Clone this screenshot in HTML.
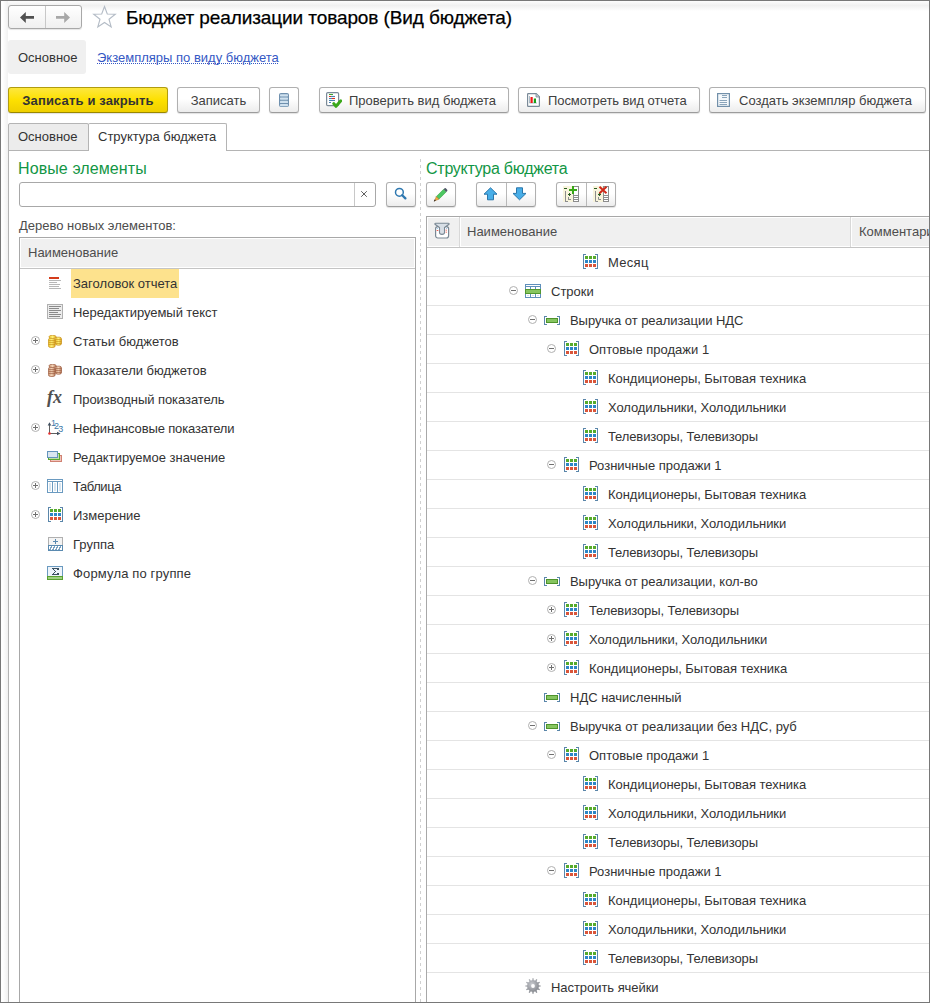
<!DOCTYPE html>
<html><head><meta charset="utf-8">
<style>
*{box-sizing:border-box;margin:0;padding:0}
html,body{width:930px;height:1003px;overflow:hidden;background:#fff}
body{position:relative;font-family:"Liberation Sans",sans-serif;font-size:13px;color:#333}
.a{position:absolute}
.t{position:absolute;white-space:nowrap}
.win{left:0;top:0;width:930px;height:1003px;border:1px solid #787878}
.btn{position:absolute;top:87px;height:26px;padding-top:1px;border:1px solid #b0b0b0;border-bottom-color:#9c9c9c;border-radius:3px;background:linear-gradient(#fff 0%,#fff 45%,#ececec 100%);box-shadow:0 1px 1px rgba(0,0,0,.12);line-height:24px;white-space:nowrap;color:#404040}
.sbtn{position:absolute;top:182px;height:25px;border:1px solid #b0b0b0;border-bottom-color:#9c9c9c;border-radius:3px;background:linear-gradient(#fff 0%,#fff 45%,#ececec 100%);box-shadow:0 1px 1px rgba(0,0,0,.12)}
.ico{position:absolute}
.row{position:absolute;height:29px;line-height:28px;white-space:nowrap}
</style></head><body>
<svg width="0" height="0" style="position:absolute">
<defs>
<linearGradient id="gcoin" x1="0" x2="1" y1="0" y2="0"><stop offset="0" stop-color="#f0c830"/><stop offset="0.5" stop-color="#fff27a"/><stop offset="1" stop-color="#e0a820"/></linearGradient>
<linearGradient id="bcoin" x1="0" x2="1" y1="0" y2="0"><stop offset="0" stop-color="#d09a78"/><stop offset="0.5" stop-color="#f4d4b8"/><stop offset="1" stop-color="#b87858"/></linearGradient>
<symbol id="dim" viewBox="0 0 15 15" shape-rendering="crispEdges">
<path d="M3 0.5H0.5V14.5H3M12 0.5H14.5V14.5H12" fill="none" stroke="#5a86aa"/>
<g fill="#56ab2c"><rect x="2" y="2" width="3" height="3"/><rect x="6" y="2" width="3" height="3"/><rect x="10" y="2" width="3" height="3"/></g>
<g fill="#2d86c6"><rect x="2" y="6" width="3" height="3"/><rect x="6" y="6" width="3" height="3"/><rect x="10" y="6" width="3" height="3"/></g>
<g fill="#d9553a"><rect x="2" y="10" width="3" height="3"/><rect x="6" y="10" width="3" height="3"/><rect x="10" y="10" width="3" height="3"/></g>
</symbol>
<symbol id="rows" viewBox="0 0 16 14" shape-rendering="crispEdges">
<rect x="0" y="0" width="16" height="14" fill="#5e8fbb"/>
<rect x="1" y="1" width="14" height="1" fill="#fff"/>
<rect x="1" y="3" width="4" height="2" fill="#fff"/><rect x="6" y="3" width="4" height="2" fill="#fff"/><rect x="11" y="3" width="4" height="2" fill="#fff"/>
<rect x="0" y="5" width="16" height="5" fill="#52972f"/>
<rect x="1" y="6" width="14" height="3" fill="#86c560"/>
<rect x="1" y="10" width="4" height="3" fill="#fff"/><rect x="6" y="10" width="4" height="3" fill="#fff"/><rect x="11" y="10" width="4" height="3" fill="#fff"/>
<rect x="2" y="11" width="2" height="1" fill="#cfe0f0"/><rect x="7" y="11" width="2" height="1" fill="#cfe0f0"/><rect x="12" y="11" width="2" height="1" fill="#cfe0f0"/>
</symbol>
<symbol id="bar" viewBox="0 0 16 9" shape-rendering="crispEdges">
<path d="M3 0.5H0.5V8.5H3M13 0.5H15.5V8.5H13" fill="none" stroke="#5a86aa"/>
<rect x="2" y="2" width="12" height="5" fill="#4f932c"/>
<rect x="3" y="3" width="10" height="3" fill="#86c560"/>
</symbol>
<symbol id="minus" viewBox="0 0 9 9">
<circle cx="4.5" cy="4.5" r="4" fill="#fff" stroke="#b0b0b0"/>
<rect x="2" y="4" width="5" height="1" fill="#707070"/>
</symbol>
<symbol id="plus" viewBox="0 0 9 9">
<circle cx="4.5" cy="4.5" r="4" fill="#fff" stroke="#b0b0b0"/>
<rect x="2" y="4" width="5" height="1" fill="#707070"/>
<rect x="4" y="2" width="1" height="5" fill="#707070"/>
</symbol>
<symbol id="gear" viewBox="0 0 16 16">
<radialGradient id="ggr" cx="0.4" cy="0.35" r="0.7"><stop offset="0" stop-color="#c8cacf"/><stop offset="1" stop-color="#85888e"/></radialGradient>
<path fill="url(#ggr)" d="M13.54 7.20 L15.68 7.39 L15.68 8.61 L13.54 8.80 L13.20 10.08 L14.95 11.31 L14.34 12.37 L12.40 11.47 L11.47 12.40 L12.37 14.34 L11.31 14.95 L10.08 13.20 L8.80 13.54 L8.61 15.68 L7.39 15.68 L7.20 13.54 L5.92 13.20 L4.69 14.95 L3.63 14.34 L4.53 12.40 L3.60 11.47 L1.66 12.37 L1.05 11.31 L2.80 10.08 L2.46 8.80 L0.32 8.61 L0.32 7.39 L2.46 7.20 L2.80 5.92 L1.05 4.69 L1.66 3.63 L3.60 4.53 L4.53 3.60 L3.63 1.66 L4.69 1.05 L5.92 2.80 L7.20 2.46 L7.39 0.32 L8.61 0.32 L8.80 2.46 L10.08 2.80 L11.31 1.05 L12.37 1.66 L11.47 3.60 L12.40 4.53 L14.34 3.63 L14.95 4.69 L13.20 5.92Z"/>
<circle cx="8" cy="8" r="5.8" fill="url(#ggr)"/>
<circle cx="8" cy="8" r="1.9" fill="#fff"/>
</symbol>
<symbol id="coins" viewBox="0 0 15 13">
<g stroke="#c8901a" stroke-width="0.7" fill="url(#gcoin)">
<rect x="7.5" y="2.2" width="6" height="8" rx="2"/>
<path d="M7.6 4.6h5.8M7.6 6.6h5.8M7.6 8.6h5.8" fill="none"/>
<rect x="0.4" y="3.2" width="6.8" height="9.3" rx="2"/>
<path d="M0.5 5.6h6.6M0.5 7.6h6.6M0.5 9.6h6.6" fill="none"/>
<ellipse cx="4.6" cy="1.9" rx="3.7" ry="1.6"/>
</g></symbol>
<symbol id="coins2" viewBox="0 0 15 13">
<g stroke="#9c5c40" stroke-width="0.7" fill="url(#bcoin)">
<rect x="7.5" y="2.2" width="6" height="8" rx="2"/>
<path d="M7.6 4.6h5.8M7.6 6.6h5.8M7.6 8.6h5.8" fill="none"/>
<rect x="0.4" y="3.2" width="6.8" height="9.3" rx="2"/>
<path d="M0.5 5.6h6.6M0.5 7.6h6.6M0.5 9.6h6.6" fill="none"/>
<ellipse cx="4.6" cy="1.9" rx="3.7" ry="1.6"/>
</g></symbol>
</defs></svg>
<div class="a win"></div>
<div class="a" style="left:1px;top:1px;width:928px;height:10px;background:linear-gradient(#fdfdfd,#f1f1f1 45%,#fff)"></div>
<div class="a" style="left:1px;top:1px;width:7px;height:1001px;background:linear-gradient(90deg,#fff 25%,#f2f2f2 95%,#fff)"></div>

<!-- nav buttons -->
<div class="a" style="left:8px;top:5px;width:74px;height:24px;border:1px solid #a8a8a8;border-radius:3px;background:linear-gradient(#fff,#f0f0f0);box-shadow:0 1px 1px rgba(0,0,0,.1)"></div>
<div class="a" style="left:45px;top:6px;width:1px;height:22px;background:#c8c8c8"></div>
<svg class="ico" style="left:19px;top:11px" width="16" height="13" viewBox="0 0 16 13"><path d="M1 6.4 L6.8 0.9 V5 H15 V7.8 H6.8 V12 Z" fill="#505050"/></svg>
<svg class="ico" style="left:55px;top:11px" width="16" height="13" viewBox="0 0 16 13"><path d="M15 6.4 L9.2 0.9 V5 H1 V7.8 H9.2 V12 Z" fill="#a8a8a8"/></svg>
<!-- star -->
<svg class="ico" style="left:92px;top:5px" width="25" height="24" viewBox="0 0 25 24"><path d="M12.5 1.5 L15.3 9 L23.3 9.2 L17 14.2 L19.2 22 L12.5 17.5 L5.8 22 L8 14.2 L1.7 9.2 L9.7 9 Z" fill="none" stroke="#b4bcc6" stroke-width="1.1"/></svg>
<div class="t" style="left:126px;top:8px;font-size:19px;line-height:20px;color:#000;letter-spacing:-0.1px;-webkit-text-stroke:0.25px #000">Бюджет реализации товаров (Вид бюджета)</div>

<!-- nav panel -->
<div class="a" style="left:8px;top:40px;width:78px;height:34px;background:#f0f0f0;border-radius:3px"></div>
<div class="t" style="left:18px;top:41px;line-height:34px">Основное</div>
<div class="t" style="left:97px;top:41px;line-height:34px;color:#3558c4">Экземпляры по виду бюджета</div>
<div class="a" style="left:97px;top:63px;width:182px;height:1px;background:repeating-linear-gradient(90deg,#3558c4 0 1px,transparent 1px 2px)"></div>

<!-- command bar -->
<div class="btn" style="left:8px;width:160px;border-color:#b09c10;border-bottom-color:#9a8800;background:linear-gradient(#fde73e,#fde000 50%,#efcf00);font-weight:bold;text-align:center;color:#333;letter-spacing:0.15px">Записать и закрыть</div>
<div class="btn" style="left:177px;width:83px;text-align:center">Записать</div>
<div class="btn" style="left:269px;width:30px"></div>
<div class="btn" style="left:319px;width:190px;padding-left:29px">Проверить вид бюджета</div>
<div class="btn" style="left:518px;width:182px;padding-left:29px;letter-spacing:-0.07px">Посмотреть вид отчета</div>
<div class="btn" style="left:709px;width:217px;padding-left:29px">Создать экземпляр бюджета</div>

<!-- tabs -->
<div class="a" style="left:8px;top:123px;width:81px;height:28px;border:1px solid #b4b4b4;border-radius:2px 2px 0 0;background:#ececec"></div>
<div class="t" style="left:18px;top:124px;line-height:26px">Основное</div>
<div class="a" style="left:88px;top:123px;width:139px;height:28px;border:1px solid #b4b4b4;border-bottom:none;border-radius:2px 2px 0 0;background:#fff"></div>
<div class="t" style="left:98px;top:124px;line-height:26px">Структура бюджета</div>
<div class="a" style="left:226px;top:150px;width:704px;height:1px;background:#b4b4b4"></div>
<div class="a" style="left:8px;top:150px;width:1px;height:853px;background:#b4b4b4"></div>

<!-- left panel -->
<div class="t" style="left:18px;top:159px;font-size:16px;line-height:20px;color:#129645;letter-spacing:0.1px">Новые элементы</div>
<div class="a" style="left:19px;top:182px;width:357px;height:25px;border:1px solid #a8a8a8;border-radius:3px;background:#fff"></div>
<div class="a" style="left:354px;top:183px;width:1px;height:23px;background:#c8c8c8"></div>
<svg class="ico" style="left:360px;top:190px" width="8" height="8" viewBox="0 0 8 8"><path d="M1.2 1.2L6.8 6.8M6.8 1.2L1.2 6.8" stroke="#606060" stroke-width="1"/></svg>
<div class="sbtn" style="left:386px;width:30px"></div>
<div class="t" style="left:19px;top:216px;line-height:20px;color:#4d4d4d">Дерево новых элементов:</div>

<div class="a" style="left:19px;top:237px;width:397px;height:766px;border:1px solid #a8a8a8;border-bottom:none;background:#fff"></div>
<div class="a" style="left:21px;top:239px;width:393px;height:28px;background:#f0f0f0"></div>
<div class="a" style="left:20px;top:268px;width:395px;height:1px;background:#c4c4c4"></div>
<div class="t" style="left:28px;top:239px;line-height:28px;color:#4d4d4d">Наименование</div>
<div class="a" style="left:71px;top:269px;width:108px;height:29px;background:#fde28d"></div>

<div class="row" style="left:73px;top:269px;line-height:29px">Заголовок отчета</div>
<div class="row" style="left:73px;top:298px;line-height:29px;letter-spacing:-0.07px">Нередактируемый текст</div>
<svg class="ico" style="left:31px;top:336px" width="9" height="9"><use href="#plus"/></svg>
<div class="row" style="left:73px;top:327px;line-height:29px">Статьи бюджетов</div>
<svg class="ico" style="left:31px;top:365px" width="9" height="9"><use href="#plus"/></svg>
<div class="row" style="left:73px;top:356px;line-height:29px">Показатели бюджетов</div>
<div class="row" style="left:73px;top:385px;line-height:29px;letter-spacing:-0.065px">Производный показатель</div>
<svg class="ico" style="left:31px;top:423px" width="9" height="9"><use href="#plus"/></svg>
<div class="row" style="left:73px;top:414px;line-height:29px;letter-spacing:-0.15px">Нефинансовые показатели</div>
<div class="row" style="left:73px;top:443px;line-height:29px">Редактируемое значение</div>
<svg class="ico" style="left:31px;top:481px" width="9" height="9"><use href="#plus"/></svg>
<div class="row" style="left:73px;top:472px;line-height:29px;letter-spacing:-0.43px">Таблица</div>
<svg class="ico" style="left:31px;top:510px" width="9" height="9"><use href="#plus"/></svg>
<div class="row" style="left:73px;top:501px;line-height:29px">Измерение</div>
<div class="row" style="left:73px;top:530px;line-height:29px">Группа</div>
<div class="row" style="left:73px;top:559px;line-height:29px;letter-spacing:0.15px">Формула по группе</div>
<svg class="ico" style="left:49px;top:277px" width="13" height="13" viewBox="0 0 13 13" shape-rendering="crispEdges"><rect x="0" y="0" width="10" height="2" fill="#d43c1c"/>
<g fill="#b8b8b8"><rect x="0" y="3" width="12" height="1"/><rect x="0" y="5" width="8" height="1"/><rect x="0" y="7" width="11" height="1"/><rect x="0" y="9" width="10" height="1"/><rect x="0" y="11" width="12" height="1"/></g></svg>
<svg class="ico" style="left:47px;top:304px" width="16" height="15" viewBox="0 0 16 15" shape-rendering="crispEdges"><rect x="0.5" y="0.5" width="15" height="14" fill="#ececec" stroke="#b0b0b0"/>
<g fill="#8a8a8a"><rect x="2" y="2" width="12" height="1"/><rect x="2" y="4" width="10" height="1"/><rect x="2" y="6" width="12" height="1"/><rect x="2" y="8" width="9" height="1"/><rect x="2" y="10" width="12" height="1"/><rect x="2" y="12" width="11" height="1"/></g></svg>
<svg class="ico" style="left:48px;top:335px" width="15" height="13"><use href="#coins"/></svg>
<svg class="ico" style="left:48px;top:364px" width="15" height="13"><use href="#coins2"/></svg>
<div class="t" style="left:47px;top:387px;font-family:'Liberation Serif',serif;font-style:italic;font-weight:bold;font-size:18px;line-height:20px;color:#505050;letter-spacing:0px">fx</div>
<svg class="ico" style="left:46px;top:419px" width="18" height="17" viewBox="0 0 18 17" ><path d="M3.5 14.5V4" stroke="#606060" stroke-width="1" fill="none"/><path d="M1.7 6.5L3.5 3.2L5.3 6.5Z" fill="#405060"/>
<path d="M3.5 14.5H12" stroke="#606060" stroke-width="1"/><path d="M11 12.7L14.5 14.5L11 16.3Z" fill="#405060"/>
<circle cx="3.5" cy="14.5" r="1.3" fill="#e83030"/>
<text x="5" y="7.3" font-family="Liberation Sans" font-size="9" fill="#3c78a8">1</text>
<text x="8" y="10.3" font-family="Liberation Sans" font-size="9" fill="#3c78a8">2</text>
<text x="12.3" y="13.3" font-family="Liberation Sans" font-size="9" fill="#3c78a8">3</text></svg>
<svg class="ico" style="left:47px;top:451px" width="15" height="11" viewBox="0 0 15 11" shape-rendering="crispEdges"><rect x="3.5" y="4.5" width="11" height="6" fill="#f2c4bc" stroke="#d08272"/>
<rect x="1.5" y="2.5" width="11" height="6" fill="#c0e0a8" stroke="#58a830"/>
<rect x="0.5" y="0.5" width="10" height="6" fill="#dae6f0" stroke="#6494bc"/></svg>
<svg class="ico" style="left:47px;top:479px" width="16" height="14" viewBox="0 0 16 14" shape-rendering="crispEdges"><rect x="0.5" y="0.5" width="15" height="13" fill="#fff" stroke="#6a9ac0"/>
<path d="M0 2.5H16M5.5 3V14M10.5 3V14" stroke="#6a9ac0"/>
<g fill="#d6e4ef"><rect x="2" y="4" width="2" height="8"/><rect x="7" y="4" width="2" height="8"/><rect x="12" y="4" width="2" height="8"/></g></svg>
<svg class="ico" style="left:48px;top:507px" width="15" height="15"><use href="#dim"/></svg>
<svg class="ico" style="left:48px;top:537px" width="15" height="14" viewBox="0 0 15 14" shape-rendering="crispEdges"><rect x="0.5" y="0.5" width="14" height="8" fill="#f4f4f4" stroke="#b0b0b0"/>
<path d="M5 4.5H10M7.5 2V7" stroke="#5a8ab0" stroke-width="1.2"/>
<rect x="0.5" y="8.5" width="14" height="5" fill="#fff" stroke="#5a8ab0"/>
<path d="M1.5 13L4 9M4.5 13L7 9M7.5 13L10 9M10.5 13L13 9" stroke="#7aa0c0" stroke-width="1.2"/></svg>
<svg class="ico" style="left:47px;top:566px" width="16" height="14" viewBox="0 0 16 14" shape-rendering="crispEdges"><rect x="0.5" y="0.5" width="15" height="10" fill="#eef4fa" stroke="#6a9ac0"/>
<path d="M11 4V2.5H5.5L8.5 5.5L5.5 8.5H11V7" stroke="#3a5060" stroke-width="1.2" fill="none"/>
<rect x="0.5" y="10.5" width="15" height="3" fill="#9ed080" stroke="#58a030"/></svg>

<!-- splitter -->
<div class="a" style="left:420px;top:159px;width:1px;height:844px;background:repeating-linear-gradient(180deg,#d0d0d0 0 3px,transparent 3px 6px)"></div>

<!-- right panel -->
<div class="t" style="left:426px;top:159px;font-size:16px;line-height:20px;color:#129645;letter-spacing:-0.25px">Структура бюджета</div>
<div class="sbtn" style="left:426px;width:30px"></div>
<div class="sbtn" style="left:476px;width:60px"></div>
<div class="a" style="left:506px;top:183px;width:1px;height:23px;background:#b8b8b8"></div>
<div class="sbtn" style="left:556px;width:60px"></div>
<div class="a" style="left:586px;top:183px;width:1px;height:23px;background:#b8b8b8"></div>

<div class="a" style="left:426px;top:216px;width:504px;height:787px;border-left:1px solid #a8a8a8;border-top:1px solid #a8a8a8;background:#fff"></div>
<div class="a" style="left:428px;top:218px;width:31px;height:28px;background:#f0f0f0"></div>
<div class="a" style="left:459px;top:217px;width:1px;height:30px;background:#d8d8d8"></div>
<div class="a" style="left:461px;top:218px;width:389px;height:28px;background:#f0f0f0"></div>
<div class="a" style="left:850px;top:217px;width:1px;height:30px;background:#d8d8d8"></div>
<div class="a" style="left:852px;top:218px;width:78px;height:28px;background:#f0f0f0"></div>
<div class="a" style="left:427px;top:247px;width:503px;height:1px;background:#c4c4c4"></div>
<div class="t" style="left:467px;top:218px;line-height:28px;color:#4d4d4d">Наименование</div>
<div class="t" style="left:859px;top:218px;line-height:28px;color:#4d4d4d">Комментарий</div>

<div class="a" style="left:427px;top:276px;width:503px;height:1px;background:#e4e4e4"></div>
<svg class="ico" style="left:583px;top:254px" width="15" height="15"><use href="#dim"/></svg>
<div class="row" style="left:608px;top:249px;letter-spacing:0.3px">Месяц</div>
<div class="a" style="left:427px;top:305px;width:503px;height:1px;background:#e4e4e4"></div>
<svg class="ico" style="left:509px;top:286px" width="9" height="9"><use href="#minus"/></svg>
<svg class="ico" style="left:525px;top:284px" width="16" height="14"><use href="#rows"/></svg>
<div class="row" style="left:551px;top:278px">Строки</div>
<div class="a" style="left:427px;top:334px;width:503px;height:1px;background:#e4e4e4"></div>
<svg class="ico" style="left:528px;top:315px" width="9" height="9"><use href="#minus"/></svg>
<svg class="ico" style="left:544px;top:316px" width="16" height="9"><use href="#bar"/></svg>
<div class="row" style="left:570px;top:307px;letter-spacing:-0.05px">Выручка от реализации НДС</div>
<div class="a" style="left:427px;top:363px;width:503px;height:1px;background:#e4e4e4"></div>
<svg class="ico" style="left:547px;top:344px" width="9" height="9"><use href="#minus"/></svg>
<svg class="ico" style="left:564px;top:341px" width="15" height="15"><use href="#dim"/></svg>
<div class="row" style="left:589px;top:336px">Оптовые продажи 1</div>
<div class="a" style="left:427px;top:392px;width:503px;height:1px;background:#e4e4e4"></div>
<svg class="ico" style="left:583px;top:370px" width="15" height="15"><use href="#dim"/></svg>
<div class="row" style="left:608px;top:365px;letter-spacing:-0.045px">Кондиционеры, Бытовая техника</div>
<div class="a" style="left:427px;top:421px;width:503px;height:1px;background:#e4e4e4"></div>
<svg class="ico" style="left:583px;top:399px" width="15" height="15"><use href="#dim"/></svg>
<div class="row" style="left:608px;top:394px;letter-spacing:-0.1px">Холодильники, Холодильники</div>
<div class="a" style="left:427px;top:450px;width:503px;height:1px;background:#e4e4e4"></div>
<svg class="ico" style="left:583px;top:428px" width="15" height="15"><use href="#dim"/></svg>
<div class="row" style="left:608px;top:423px;letter-spacing:-0.115px">Телевизоры, Телевизоры</div>
<div class="a" style="left:427px;top:479px;width:503px;height:1px;background:#e4e4e4"></div>
<svg class="ico" style="left:547px;top:460px" width="9" height="9"><use href="#minus"/></svg>
<svg class="ico" style="left:564px;top:457px" width="15" height="15"><use href="#dim"/></svg>
<div class="row" style="left:589px;top:452px">Розничные продажи 1</div>
<div class="a" style="left:427px;top:508px;width:503px;height:1px;background:#e4e4e4"></div>
<svg class="ico" style="left:583px;top:486px" width="15" height="15"><use href="#dim"/></svg>
<div class="row" style="left:608px;top:481px;letter-spacing:-0.045px">Кондиционеры, Бытовая техника</div>
<div class="a" style="left:427px;top:537px;width:503px;height:1px;background:#e4e4e4"></div>
<svg class="ico" style="left:583px;top:515px" width="15" height="15"><use href="#dim"/></svg>
<div class="row" style="left:608px;top:510px;letter-spacing:-0.1px">Холодильники, Холодильники</div>
<div class="a" style="left:427px;top:566px;width:503px;height:1px;background:#e4e4e4"></div>
<svg class="ico" style="left:583px;top:544px" width="15" height="15"><use href="#dim"/></svg>
<div class="row" style="left:608px;top:539px;letter-spacing:-0.115px">Телевизоры, Телевизоры</div>
<div class="a" style="left:427px;top:595px;width:503px;height:1px;background:#e4e4e4"></div>
<svg class="ico" style="left:528px;top:576px" width="9" height="9"><use href="#minus"/></svg>
<svg class="ico" style="left:544px;top:577px" width="16" height="9"><use href="#bar"/></svg>
<div class="row" style="left:570px;top:568px;letter-spacing:-0.055px">Выручка от реализации, кол-во</div>
<div class="a" style="left:427px;top:624px;width:503px;height:1px;background:#e4e4e4"></div>
<svg class="ico" style="left:547px;top:605px" width="9" height="9"><use href="#plus"/></svg>
<svg class="ico" style="left:564px;top:602px" width="15" height="15"><use href="#dim"/></svg>
<div class="row" style="left:589px;top:597px;letter-spacing:-0.115px">Телевизоры, Телевизоры</div>
<div class="a" style="left:427px;top:653px;width:503px;height:1px;background:#e4e4e4"></div>
<svg class="ico" style="left:547px;top:634px" width="9" height="9"><use href="#plus"/></svg>
<svg class="ico" style="left:564px;top:631px" width="15" height="15"><use href="#dim"/></svg>
<div class="row" style="left:589px;top:626px;letter-spacing:-0.1px">Холодильники, Холодильники</div>
<div class="a" style="left:427px;top:682px;width:503px;height:1px;background:#e4e4e4"></div>
<svg class="ico" style="left:547px;top:663px" width="9" height="9"><use href="#plus"/></svg>
<svg class="ico" style="left:564px;top:660px" width="15" height="15"><use href="#dim"/></svg>
<div class="row" style="left:589px;top:655px;letter-spacing:-0.045px">Кондиционеры, Бытовая техника</div>
<div class="a" style="left:427px;top:711px;width:503px;height:1px;background:#e4e4e4"></div>
<svg class="ico" style="left:544px;top:693px" width="16" height="9"><use href="#bar"/></svg>
<div class="row" style="left:570px;top:684px">НДС начисленный</div>
<div class="a" style="left:427px;top:740px;width:503px;height:1px;background:#e4e4e4"></div>
<svg class="ico" style="left:528px;top:721px" width="9" height="9"><use href="#minus"/></svg>
<svg class="ico" style="left:544px;top:722px" width="16" height="9"><use href="#bar"/></svg>
<div class="row" style="left:570px;top:713px">Выручка от реализации без НДС, руб</div>
<div class="a" style="left:427px;top:769px;width:503px;height:1px;background:#e4e4e4"></div>
<svg class="ico" style="left:547px;top:750px" width="9" height="9"><use href="#minus"/></svg>
<svg class="ico" style="left:564px;top:747px" width="15" height="15"><use href="#dim"/></svg>
<div class="row" style="left:589px;top:742px">Оптовые продажи 1</div>
<div class="a" style="left:427px;top:798px;width:503px;height:1px;background:#e4e4e4"></div>
<svg class="ico" style="left:583px;top:776px" width="15" height="15"><use href="#dim"/></svg>
<div class="row" style="left:608px;top:771px;letter-spacing:-0.045px">Кондиционеры, Бытовая техника</div>
<div class="a" style="left:427px;top:827px;width:503px;height:1px;background:#e4e4e4"></div>
<svg class="ico" style="left:583px;top:805px" width="15" height="15"><use href="#dim"/></svg>
<div class="row" style="left:608px;top:800px;letter-spacing:-0.1px">Холодильники, Холодильники</div>
<div class="a" style="left:427px;top:856px;width:503px;height:1px;background:#e4e4e4"></div>
<svg class="ico" style="left:583px;top:834px" width="15" height="15"><use href="#dim"/></svg>
<div class="row" style="left:608px;top:829px;letter-spacing:-0.115px">Телевизоры, Телевизоры</div>
<div class="a" style="left:427px;top:885px;width:503px;height:1px;background:#e4e4e4"></div>
<svg class="ico" style="left:547px;top:866px" width="9" height="9"><use href="#minus"/></svg>
<svg class="ico" style="left:564px;top:863px" width="15" height="15"><use href="#dim"/></svg>
<div class="row" style="left:589px;top:858px">Розничные продажи 1</div>
<div class="a" style="left:427px;top:914px;width:503px;height:1px;background:#e4e4e4"></div>
<svg class="ico" style="left:583px;top:892px" width="15" height="15"><use href="#dim"/></svg>
<div class="row" style="left:608px;top:887px;letter-spacing:-0.045px">Кондиционеры, Бытовая техника</div>
<div class="a" style="left:427px;top:943px;width:503px;height:1px;background:#e4e4e4"></div>
<svg class="ico" style="left:583px;top:921px" width="15" height="15"><use href="#dim"/></svg>
<div class="row" style="left:608px;top:916px;letter-spacing:-0.1px">Холодильники, Холодильники</div>
<div class="a" style="left:427px;top:972px;width:503px;height:1px;background:#e4e4e4"></div>
<svg class="ico" style="left:583px;top:950px" width="15" height="15"><use href="#dim"/></svg>
<div class="row" style="left:608px;top:945px;letter-spacing:-0.115px">Телевизоры, Телевизоры</div>
<svg class="ico" style="left:525px;top:978px" width="16" height="16"><use href="#gear"/></svg>
<div class="row" style="left:551px;top:974px;letter-spacing:-0.05px">Настроить ячейки</div>

<!-- window border on top -->
<div class="a" style="left:0;top:0;width:930px;height:1px;background:#787878"></div>
<div class="a" style="left:0;top:0;width:1px;height:1003px;background:#787878"></div>
<div class="a" style="left:929px;top:0;width:1px;height:1003px;background:#787878"></div>
<div class="a" style="left:0;top:1002px;width:930px;height:1px;background:#787878"></div>
<svg class="ico" style="left:279px;top:93px" width="10" height="14" viewBox="0 0 10 14" ><rect x="0" y="0" width="10" height="14" rx="2" fill="#6f90ae"/>
<g fill="#cfe1ef"><rect x="1" y="1.2" width="8" height="2.2" rx="0.6"/><rect x="1" y="4.5" width="8" height="2.2" rx="0.6"/><rect x="1" y="7.8" width="8" height="2.2" rx="0.6"/><rect x="1" y="11" width="8" height="2.2" rx="0.6"/></g></svg>
<svg class="ico" style="left:326px;top:92px" width="16" height="17" viewBox="0 0 16 17" ><rect x="0.6" y="0.6" width="12" height="13" rx="1.2" fill="#fff" stroke="#7a8a98" stroke-width="1.2"/>
<g stroke-width="1.1"><path d="M3 2.5H7" stroke="#40a030"/><path d="M3 4.5H5" stroke="#e03020"/><path d="M5 4.5H9" stroke="#4a80b0"/>
<path d="M3 6.5H6" stroke="#4a80b0"/><path d="M6 6.5H9" stroke="#e03020"/><path d="M3 8.5H9" stroke="#4a80b0"/><path d="M3 10.5H5" stroke="#4a80b0"/></g>
<path d="M7.8 11.6L10 14.3L14.8 8.8" stroke="#3aa81a" stroke-width="3" fill="none" stroke-linecap="round" stroke-linejoin="round"/></svg>
<svg class="ico" style="left:527px;top:93px" width="13" height="14" viewBox="0 0 13 14" ><path d="M0.6 1.2Q0.6 0.6 1.2 0.6H9.2L12.4 3.8V12.8Q12.4 13.4 11.8 13.4H1.2Q0.6 13.4 0.6 12.8Z" fill="#fff" stroke="#7a8a98" stroke-width="1.2"/>
<path d="M9 0.8V4H12.2" fill="#c0ccd6" stroke="#7a8a98" stroke-width="0.8"/>
<path d="M2.5 3V10H10" stroke="#8aa0b0" stroke-width="0.7" fill="none"/>
<rect x="3.5" y="4" width="2.2" height="6" fill="#f01818"/><rect x="6.8" y="5.5" width="2.2" height="4.5" fill="#18a018"/></svg>
<svg class="ico" style="left:717px;top:93px" width="13" height="14" viewBox="0 0 13 14" ><rect x="0.6" y="0.6" width="11.8" height="12.8" fill="#f4f8fb" stroke="#7290aa" stroke-width="1.2"/>
<g stroke="#8aa4ba" stroke-width="1"><path d="M5 2.5H10M5 4.5H10M2.5 7.5H10M2.5 9.5H10M2.5 11.5H10"/></g></svg>
<svg class="ico" style="left:392px;top:186px" width="16" height="16" viewBox="0 0 16 16" ><circle cx="7.4" cy="6.3" r="3.9" fill="none" stroke="#2e78b0" stroke-width="1.5"/>
<path d="M10.2 9.2L13.4 12.4" stroke="#2e78b0" stroke-width="2.3" stroke-linecap="round"/></svg>
<svg class="ico" style="left:432px;top:187px" width="17" height="16" viewBox="0 0 17 16" ><path d="M4.3 9.6L11.6 2.3L14.2 4.9L6.9 12.2Z" fill="#4cc862" stroke="#3a9a40" stroke-width="0.5"/>
<path d="M11.6 2.3L12.6 1.3Q13.2 0.8 13.8 1.3L15.2 2.7Q15.7 3.3 15.2 3.9L14.2 4.9Z" fill="#505868"/>
<path d="M4.3 9.6L6.9 12.2L3.2 13.6L2.9 13.3Z" fill="#f8b040" stroke="#a86a20" stroke-width="0.5"/>
<path d="M2.2 14.2L3.4 13.4L2.8 12.8Z" fill="#403020" stroke="#403020" stroke-width="0.8"/></svg>
<svg class="ico" style="left:483px;top:187px" width="15" height="14" viewBox="0 0 15 14" ><path d="M7.5 0.8L14 7.2H10.5V12.8H4.5V7.2H1Z" fill="#48aee8" stroke="#2a76aa" stroke-width="1" stroke-linejoin="round"/></svg>
<svg class="ico" style="left:512px;top:187px" width="15" height="14" viewBox="0 0 15 14" ><path d="M7.5 12.8L14 6.4H10.5V0.8H4.5V6.4H1Z" fill="#48aee8" stroke="#2a76aa" stroke-width="1" stroke-linejoin="round"/></svg>
<svg class="ico" style="left:563px;top:186px" width="16" height="16" viewBox="0 0 16 16" shape-rendering="crispEdges"><rect x="0" y="0" width="12" height="16" fill="#f8f4dc"/>
<rect x="1" y="2" width="3" height="1" fill="#285a20"/>
<path d="M2.5 5V15.5H5" stroke="#8c8c8c" fill="none"/>
<path d="M5.5 11V13.5H8" stroke="#8c8c8c" fill="none"/>
<path d="M5 8.5H8M6.5 7V10" stroke="#285a20" stroke-width="1.2"/>
<rect x="10.5" y="0.5" width="5" height="15" fill="#fff" stroke="#8c8c8c"/>
<path d="M10.5 9.5H15.5M10.5 11.5H15.5M10.5 13.5H15.5" stroke="#8c8c8c"/><path d="M6 3.5H14M10 0V7.8" stroke="#38a818" stroke-width="2"/></svg>
<svg class="ico" style="left:593px;top:186px" width="16" height="16" viewBox="0 0 16 16" ><rect x="0" y="0" width="12" height="16" fill="#f8f4dc"/>
<rect x="1" y="2" width="3" height="1" fill="#285a20"/>
<path d="M2.5 5V15.5H5" stroke="#8c8c8c" fill="none"/>
<path d="M5.5 11V13.5H8" stroke="#8c8c8c" fill="none"/>
<path d="M5 8.5H8M6.5 7V10" stroke="#285a20" stroke-width="1.2"/>
<rect x="10.5" y="0.5" width="5" height="15" fill="#fff" stroke="#8c8c8c"/>
<path d="M10.5 9.5H15.5M10.5 11.5H15.5M10.5 13.5H15.5" stroke="#8c8c8c"/><path d="M6.5 0.8L13.5 7.2M13.5 0.8L6.5 7.2" stroke="#d02818" stroke-width="2"/></svg>
<svg class="ico" style="left:434px;top:222px" width="17" height="17" viewBox="0 0 17 17" ><rect x="1.6" y="4.6" width="13" height="11.4" rx="2.2" fill="#fff" stroke="#7a8894" stroke-width="1.2"/>
<path d="M1.6 1.3H14.4Q15.4 1.3 15 2.3L10.5 5.6V10.6Q10.5 12.4 8 12.4Q5.5 12.4 5.5 10.6V5.6L1 2.3Q0.6 1.3 1.6 1.3Z" fill="#d8dfe6" stroke="#7a8894" stroke-width="1.1"/>
<rect x="2.7" y="8" width="1.6" height="1" fill="#f06050"/><rect x="11.7" y="7.6" width="1" height="1.2" fill="#f06050"/><rect x="11.7" y="9.6" width="1" height="1.2" fill="#f06050"/>
<rect x="3" y="6" width="1" height="1" fill="#9cc8ee"/><rect x="12" y="6" width="1" height="1" fill="#9cc8ee"/></svg>
</body></html>
